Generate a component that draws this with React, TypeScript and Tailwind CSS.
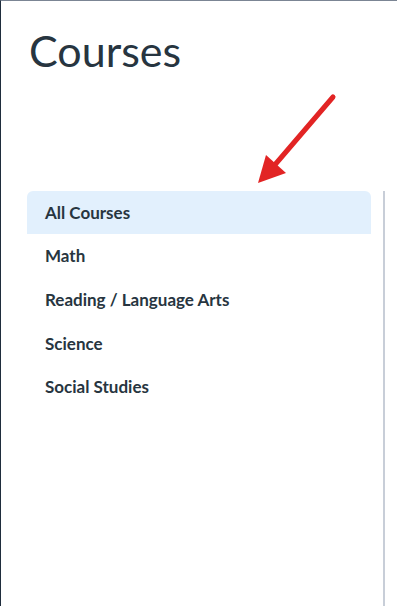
import React from 'react';

const items = ['All Courses', 'Math', 'Reading / Language Arts', 'Science', 'Social Studies'];

export default function App() {
  return (
    <div
      className="relative h-[606px] w-[397px] overflow-hidden border-l border-t border-l-[#1f2d3d] border-t-[#7b8594] bg-white text-[#273540]"
      style={{ fontFamily: 'Lato, "Open Sans", sans-serif' }}
    >
      <h1 className="pl-[28px] pt-[22px] text-[43px] leading-[56px] font-normal">Courses</h1>

      <svg className="absolute left-[250px] top-[90px]" width="90" height="100" viewBox="0 0 90 100">
        <line x1="82" y1="6" x2="22" y2="76" stroke="#e22424" strokeWidth="5" strokeLinecap="round" />
        <polygon points="7,92 15,64 35,82" fill="#e22424" />
      </svg>

      <div className="mt-[112px] flex">
        <ul className="ml-[26px] w-[344px]">
          {items.map((item, i) => (
            <li
              key={item}
              className={
                'flex items-center pl-[18px] text-[17px] font-bold ' +
                (i === 0 ? 'h-[43px] rounded-t-md bg-[#e2f0fd]' : i === 4 ? 'h-[42px]' : 'h-[44px]')
              }
            >
              {item}
            </li>
          ))}
        </ul>
        <div className="ml-[12px] h-[420px] w-[2px] bg-[#c8ced8]" />
      </div>
    </div>
  );
}
